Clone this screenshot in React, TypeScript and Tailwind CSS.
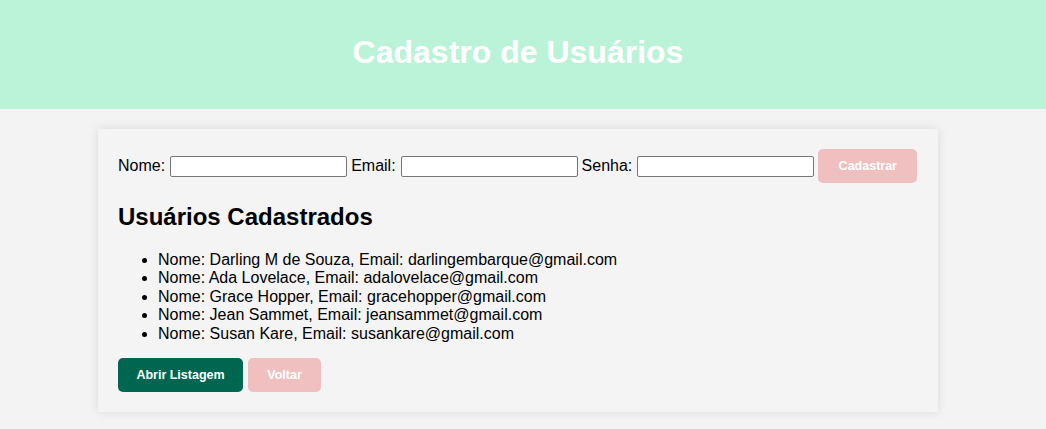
import React from "react";

const users = [
  { nome: "Darling M de Souza", email: "darlingembarque@gmail.com" },
  { nome: "Ada Lovelace", email: "adalovelace@gmail.com" },
  { nome: "Grace Hopper", email: "gracehopper@gmail.com" },
  { nome: "Jean Sammet", email: "jeansammet@gmail.com" },
  { nome: "Susan Kare", email: "susankare@gmail.com" },
];

function Field({ label, type }: { label: string; type: string }) {
  return (
    <>
      <label className="mr-[5px]">{label}</label>
      <input
        type={type}
        className="w-[177px] h-[21px] border border-[#767676] rounded-[2px] bg-white mr-[4px] outline-none"
      />
    </>
  );
}

export default function App() {
  return (
    <div
      className="min-h-[429px] bg-[#f3f3f3] text-black text-[16px]"
      style={{ fontFamily: '"Liberation Sans", Arial, sans-serif' }}
    >
      <header className="h-[109px] bg-[#bbf3d9] w-full">
        <div className="w-[1036px] h-full flex items-center justify-center pb-[4px]">
          <h1 className="text-[32px] font-bold text-white leading-[37px]">Cadastro de Usuários</h1>
        </div>
      </header>
      <main className="ml-[98px] mt-[20px] w-[840px] bg-[#f4f4f4] p-[20px] shadow-[0_0_10px_rgba(0,0,0,0.1)]">
        <div className="flex items-center h-[34px]">
          <Field label="Nome:" type="text" />
          <Field label="Email:" type="email" />
          <Field label="Senha:" type="password" />
          <button className="w-[99px] h-[34px] rounded-[5px] bg-[#f0bfbf] text-white text-[12.5px] font-bold">
            Cadastrar
          </button>
        </div>
        <h2 className="mt-[20px] text-[24px] font-bold leading-[28px]">Usuários Cadastrados</h2>
        <ul className="mt-[20px] list-disc pl-[40px] leading-[18.4px]">
          {users.map((u) => (
            <li key={u.email}>
              Nome: {u.nome}, Email: {u.email}
            </li>
          ))}
        </ul>
        <div className="mt-[15px] flex gap-[5px]">
          <button className="w-[125px] h-[34px] rounded-[5px] bg-[#00664f] text-white text-[12.5px] font-bold">
            Abrir Listagem
          </button>
          <button className="w-[73px] h-[34px] rounded-[5px] bg-[#f0bfbf] text-white text-[12.5px] font-bold">
            Voltar
          </button>
        </div>
      </main>
    </div>
  );
}
